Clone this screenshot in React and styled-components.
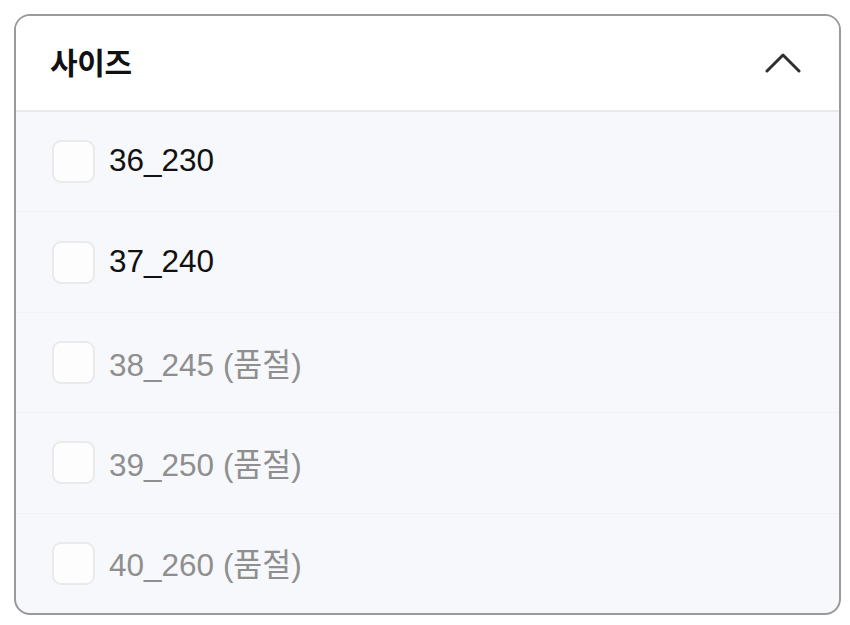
import React from "react";
import styled, { createGlobalStyle } from "styled-components";

const Global = createGlobalStyle`
  html, body { margin: 0; padding: 0; background: #ffffff; }
  body { font-family: "Liberation Sans", "Noto Sans CJK KR", sans-serif; }
  * { box-sizing: border-box; }
`;

const Page = styled.div`
  padding: 14px 9px 0 14px;
`;

const Card = styled.section`
  width: 827px;
  height: 601px;
  border: 2px solid #9a9a9a;
  border-radius: 16px;
  overflow: hidden;
  background: #f7f8fb;
  display: flex;
  flex-direction: column;
`;

const Header = styled.div`
  height: 96px;
  flex: none;
  background: #ffffff;
  border-bottom: 2px solid #e8e9eb;
  display: flex;
  align-items: center;
  justify-content: space-between;
  padding: 0 38px 0 34px;
`;

const Title = styled.h2`
  margin: 0;
  font-family: "Noto Sans CJK KR", sans-serif;
  font-weight: 700;
  font-size: 30px;
  color: #111;
  letter-spacing: -0.3px;
  position: relative;
  top: -2px;
`;

const List = styled.ul`
  list-style: none;
  margin: 0;
  padding: 0;
  flex: 1;
  display: flex;
  flex-direction: column;
`;

const Row = styled.li`
  flex: 1;
  display: flex;
  align-items: center;
  gap: 14px;
  padding-left: 36px;
  border-top: ${(p) => (p.$first ? "none" : "1px solid #f2f3f6")};
`;

const Box = styled.span`
  width: 43px;
  height: 43px;
  border: 2px solid #e9eaec;
  border-radius: 9px;
  background: #fdfdfe;
  flex: none;
`;

const Label = styled.span`
  font-family: "Liberation Sans", "Noto Sans CJK KR", sans-serif;
  font-size: 31.5px;
  color: ${(p) => (p.$soldOut ? "#8f8f8f" : "#111")};
  position: relative;
  top: -1px;
`;

const Chevron = () => (
  <svg width="36" height="22" viewBox="0 0 36 22">
    <path d="M2 19 L18 3 L34 19" fill="none" stroke="#2f2f2f" strokeWidth="3" strokeLinecap="round" strokeLinejoin="round" />
  </svg>
);

const sizes = [
  { label: "36_230", soldOut: false },
  { label: "37_240", soldOut: false },
  { label: "38_245", soldOut: true },
  { label: "39_250", soldOut: true },
  { label: "40_260", soldOut: true },
];

export default function App() {
  return (
    <>
      <Global />
      <Page>
        <Card>
          <Header>
            <Title>사이즈</Title>
            <Chevron />
          </Header>
          <List>
            {sizes.map((s, i) => (
              <Row key={s.label} $first={i === 0}>
                <Box />
                <Label $soldOut={s.soldOut}>
                  {s.label}
                  {s.soldOut ? " (품절)" : ""}
                </Label>
              </Row>
            ))}
          </List>
        </Card>
      </Page>
    </>
  );
}
